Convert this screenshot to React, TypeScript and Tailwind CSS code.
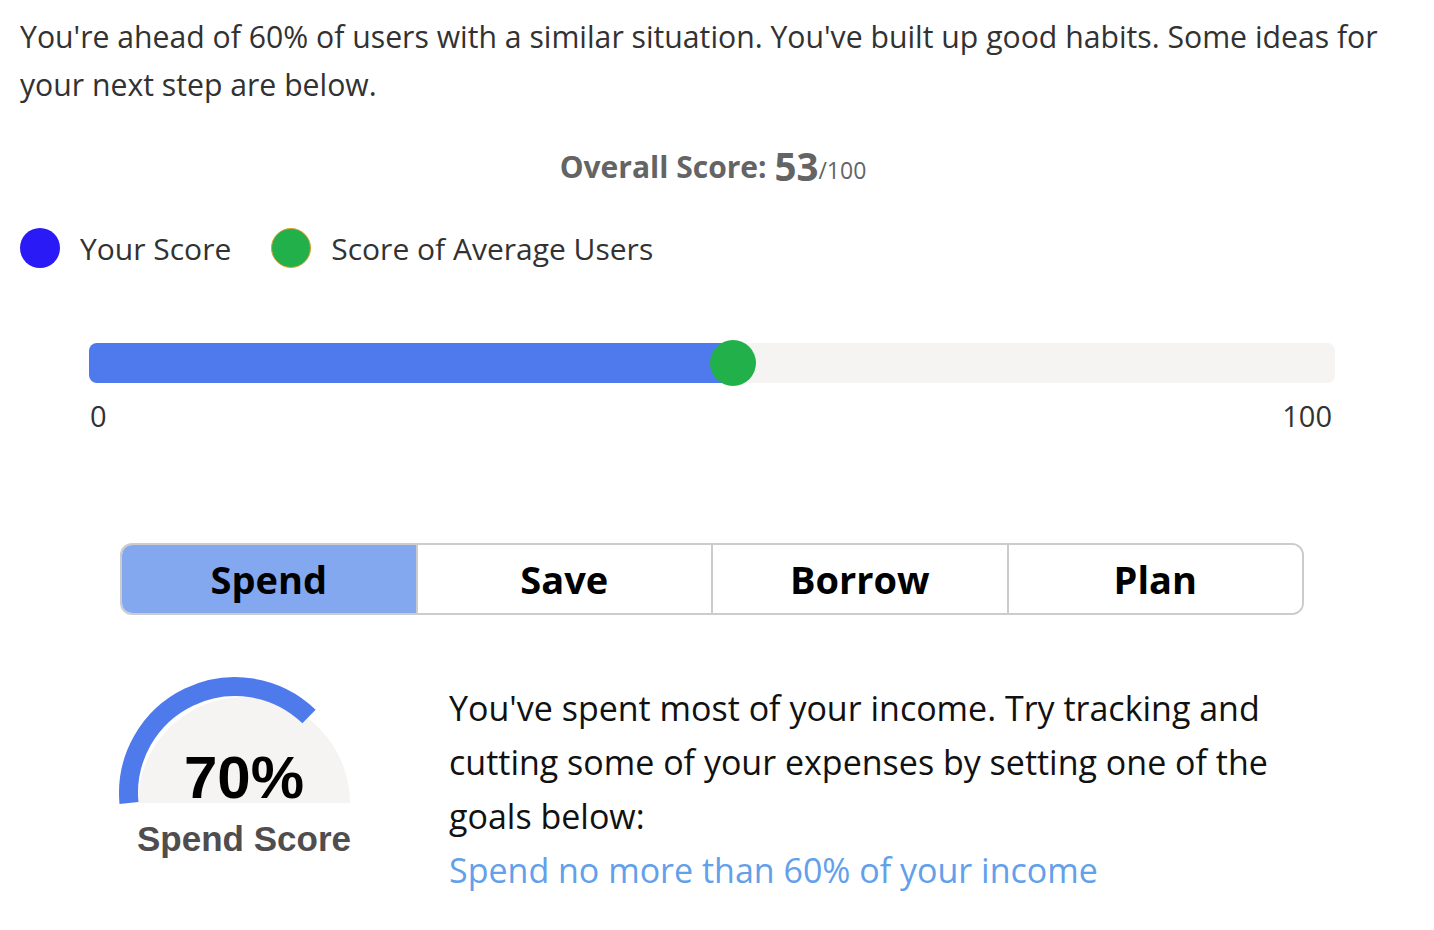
import React from "react";

const SEGOE = { fontFamily: "'Open Sans', 'Noto Sans', sans-serif" };
const ARIAL = { fontFamily: "'Liberation Sans', Arial, sans-serif" };

function Gauge() {
  // svg placed at page x=110, y=670
  return (
    <svg width="250" height="140" viewBox="0 0 250 140" className="block">
      <path d="M 28 133 A 106 106 0 0 1 240 133 Z" fill="#f5f4f2" />
      <path
        d="M 18.97 133 A 106.5 106.5 0 0 1 199 46.5"
        fill="none"
        stroke="#4e7aec"
        strokeWidth="19"
      />
      <text
        x="134"
        y="128"
        textAnchor="middle"
        fontFamily="'Liberation Sans', Arial, sans-serif"
        fontWeight="700"
        fontSize="60"
        fill="#000"
      >
        70%
      </text>
    </svg>
  );
}

export default function App() {
  const tabs = ["Spend", "Save", "Borrow", "Plan"];
  return (
    <div className="w-[1434px] h-[930px] bg-white px-5 pt-[13px]" style={SEGOE}>
      <p className="text-[30.2px] leading-[48px] text-[#323232] pr-[10px]">
        You're ahead of 60% of users with a similar situation. You've built up good habits. Some ideas for your next step are below.
      </p>

      <div className="mt-[37px] h-[40px] pr-[8px] flex items-center justify-center text-[#646464]">
        <span className="font-bold text-[30px]">Overall Score:&nbsp;</span>
        <span className="font-bold text-[38.5px] leading-none">53</span>
        <span className="text-[23px] mt-[8px]">/100</span>
      </div>

      <div className="mt-[42px] flex items-center h-[40px]">
        <div className="w-10 h-10 rounded-full bg-[#2a1af6]" />
        <span className="ml-5 text-[30px] text-[#323232]">Your Score</span>
        <div className="ml-10 w-10 h-10 rounded-full bg-[#22b04b] border border-[#e0a030]" />
        <span className="ml-5 text-[30px] text-[#323232]">Score of Average Users</span>
      </div>

      <div className="mt-[75px] ml-[69px] w-[1246px]">
        <div className="relative h-10 rounded-lg bg-[#f5f4f2]">
          <div className="h-10 rounded-l-lg bg-[#4f7aed] w-[644px]" />
          <div className="absolute left-[621px] top-[-3px] w-[46px] h-[46px] rounded-full bg-[#22b04b]" />
        </div>
        <div className="mt-[13px] flex justify-between text-[29px] leading-[40px] text-[#323232]">
          <span className="ml-[1px]">0</span>
          <span className="mr-[3px]">100</span>
        </div>
      </div>

      <div className="mt-[107px] ml-[100px] w-[1184px] h-[72px] flex rounded-[12px] border-2 border-[#cccccc] overflow-hidden">
        {tabs.map((t, i) => (
          <div
            key={t}
            className={
              "flex-1 flex items-center justify-center text-[38px] font-bold text-black " +
              (i === 0 ? "bg-[#84a8f0] " : "bg-white ") +
              (i > 0 ? "border-l-2 border-[#cccccc]" : "")
            }
          >
            {t}
          </div>
        ))}
      </div>

      <div className="mt-[55px] flex">
        <div className="ml-[90px] w-[250px] flex flex-col">
          <Gauge />
          <div
            className="w-[268px] text-center font-bold text-[35px] leading-[40px] mt-[9px] text-[#4f4d4d]"
            style={ARIAL}
          >
            Spend Score
          </div>
        </div>
        <div className="ml-[89px] mt-[11px] w-[860px] text-[34px] leading-[54px]">
          <p className="text-[#111111]">
            You've spent most of your income. Try tracking and cutting some of your expenses by setting one of the goals below:
          </p>
          <p className="text-[#62a0ea]">Spend no more than 60% of your income</p>
        </div>
      </div>
    </div>
  );
}
